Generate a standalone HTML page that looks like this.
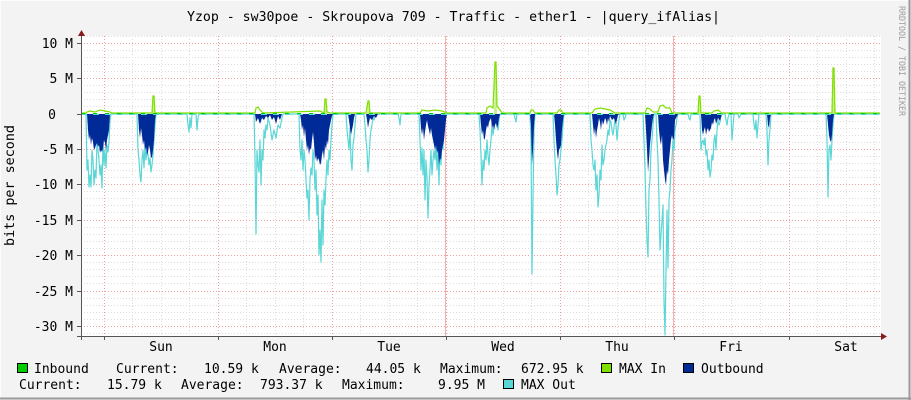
<!DOCTYPE html>
<html><head><meta charset="utf-8"><style>
html,body{margin:0;padding:0;background:#f3f3f3;}
svg{display:block;}
text{font-family:"DejaVu Sans Mono","Liberation Mono",monospace;fill:#000;}
</style></head><body>
<svg width="911" height="400" viewBox="0 0 911 400" xmlns="http://www.w3.org/2000/svg">
<rect x="0" y="0" width="911" height="400" fill="#f3f3f3"/>
<line x1="0" y1="0.5" x2="911" y2="0.5" stroke="#fcfcfc"/>
<line x1="0.5" y1="0" x2="0.5" y2="400" stroke="#fcfcfc"/>
<line x1="909.5" y1="0" x2="909.5" y2="400" stroke="#9a9a9a" stroke-width="2"/>
<line x1="0" y1="398.5" x2="911" y2="398.5" stroke="#9a9a9a" stroke-width="2"/>

<text x="187" y="21" font-size="13" textLength="533" lengthAdjust="spacingAndGlyphs">Yzop - sw30poe - Skroupova 709 - Traffic - ether1 - |query_ifAlias|</text>
<text transform="translate(899,6) rotate(90)" font-size="8.5" fill="#9c9c9c" style="fill:#9c9c9c" textLength="110" lengthAdjust="spacingAndGlyphs">RRDTOOL / TOBI OETIKER</text>
<text transform="translate(14,246) rotate(-90)" font-size="13" textLength="121" lengthAdjust="spacingAndGlyphs">bits per second</text>

<rect x="81" y="36" width="800" height="300" fill="#ffffff"/>
<g stroke="#dcdcdc" stroke-dasharray="1,2" stroke-width="1">
<path d="M81 36.5H881M81 50.5H881M81 57.5H881M81 64.5H881M81 71.5H881M81 85.5H881M81 92.5H881M81 99.5H881M81 106.5H881M81 121.5H881M81 128.5H881M81 135.5H881M81 142.5H881M81 156.5H881M81 163.5H881M81 170.5H881M81 177.5H881M81 191.5H881M81 198.5H881M81 205.5H881M81 212.5H881M81 227.5H881M81 234.5H881M81 241.5H881M81 248.5H881M81 262.5H881M81 269.5H881M81 276.5H881M81 283.5H881M81 298.5H881M81 305.5H881M81 312.5H881M81 319.5H881M81 333.5H881"/>
<path d="M132.5 36V336M161.5 36V336M189.5 36V336M246.5 36V336M275.5 36V336M303.5 36V336M360.5 36V336M389.5 36V336M417.5 36V336M474.5 36V336M503.5 36V336M531.5 36V336M588.5 36V336M617.5 36V336M645.5 36V336M703.5 36V336M731.5 36V336M760.5 36V336M817.5 36V336M846.5 36V336M874.5 36V336"/>
</g>
<g stroke="#f0a0a0" stroke-dasharray="1,2" stroke-width="1">
<path d="M81 43.5H881M81 78.5H881M81 149.5H881M81 184.5H881M81 220.5H881M81 255.5H881M81 291.5H881M81 326.5H881"/>
<path d="M104.5 36V336M218.5 36V336M332.5 36V336M446.5 36V336M560.5 36V336M674.5 36V336M789.5 36V336"/>
</g>
<line x1="445.5" y1="36" x2="445.5" y2="336" stroke="#f08080" stroke-width="1" opacity="0.6"/>
<line x1="673.5" y1="36" x2="673.5" y2="336" stroke="#f08080" stroke-width="1" opacity="0.6"/>

<polyline fill="none" stroke="#5ad6d6" stroke-width="1.2" stroke-linejoin="round" points="81,114 86,114 87,170 88,160 89,187 90,175 91,187 92,150 93,160 94,185 95,170 96,178 97,140 98,150 99,160 100,175 101,165 102,188 103,140 104,165 105,150 106,168 107,145 108,152 109,142 110,120 111,114 137,114 138,150 139,160 140,175 141,182 142,160 143,150 144,168 145,145 146,160 147,150 148,155 149,165 150,158 151,172 152,165 153,155 154,140 155,125 156,114 187,114 188,125 189,132 190,118 191,128 192,114 196,114 197,130 198,118 199,114 254,114 255,160 256,234 257,150 258,165 259,172 260,140 261,185 262,150 263,160 264,130 265,138 266,125 267,130 268,118 270,125 272,140 274,130 276,138 278,125 280,128 282,118 283,114 299,114 300,150 301,160 302,140 303,170 304,150 305,160 306,180 307,198 308,190 309,220 310,180 311,168 312,175 313,150 314,160 315,190 316,170 317,215 318,195 319,255 320,230 321,262 322,200 323,245 324,190 325,205 326,180 327,160 328,175 329,150 330,160 331,140 332,125 333,114 346,114 347,130 348,140 349,150 350,128 351,160 352,170 353,145 354,138 355,125 356,114 364,114 365,125 366,140 367,150 368,172 369,160 370,140 371,130 372,125 373,118 374,120 375,114 398,114 399,118 400,125 401,114 419,114 420,140 421,170 422,148 423,175 424,150 425,200 426,160 427,178 428,218 429,185 430,170 431,150 432,175 433,160 434,150 435,160 436,145 437,170 438,150 439,185 440,140 441,165 442,130 443,150 444,125 445,120 446,114 479,114 480,130 481,155 482,185 483,160 484,170 485,150 486,160 487,140 488,155 489,165 490,150 491,140 492,125 493,135 494,128 495,120 496,118 497,125 498,130 499,120 500,114 514,114 515,118 516,122 517,114 530,114 531,140 532,274 533,200 534,130 535,114 553,114 554,140 555,160 556,175 557,195 558,185 559,165 560,160 561,150 562,140 563,125 564,114 590,114 591,140 592,150 593,165 594,170 595,160 596,190 597,175 598,207 599,195 600,170 601,180 602,145 603,165 604,160 605,150 606,145 607,140 608,130 609,135 610,120 611,122 612,130 613,135 614,128 615,118 616,125 617,140 618,128 619,120 620,114 623,114 624,120 625,118 626,114 643,114 644,140 645,170 646,210 647,240 648,257 649,190 650,180 651,150 652,140 653,125 654,114 656,114 657,140 658,160 659,200 660,250 661,235 662,220 663,205 664,300 665,335 666,270 667,210 668,268 669,200 670,190 671,170 672,160 673,140 674,150 675,130 676,125 677,118 678,114 688,114 689,118 690,120 691,114 700,114 701,150 702,142 703,140 704,145 705,138 706,155 707,150 708,170 709,160 710,177 711,170 712,155 713,160 714,140 715,135 716,150 717,130 718,120 719,125 720,122 721,114 725,114 726,120 727,125 728,118 729,114 731,114 732,140 733,127 734,114 738,114 739,118 741,114 753,114 754,125 755,130 756,120 757,138 758,125 759,114 766,114 767,130 768,165 769,140 770,130 771,114 826,114 827,140 828,197 829,150 830,145 831,160 832,140 833,125 834,114 880,114"/>

<g fill="#002a97">
<polygon points="87,114 88,130 89,140 90,135 91,145 92,138 93,142 94,150 95,148 96,145 97,143 98,147 99,145 100,153 101,150 102,152 103,148 104,140 105,143 106,150 107,140 108,135 109,130 110,114"/>
<polygon points="138,114 139,130 140,138 141,128 142,135 143,145 144,140 145,150 146,147 147,155 148,152 149,145 150,150 151,158 152,157 153,150 154,140 155,120 156,114"/>
<polygon points="255,114 256,122 258,118 260,124 262,118 264,120 266,116 268,118 270,115 272,120 274,117 276,124 278,116 280,120 282,114"/>
<polygon points="300,114 301,120 302,130 303,125 304,137 305,128 306,140 307,150 308,145 309,155 310,148 311,150 312,140 313,132 314,143 315,160 316,155 317,162 318,158 319,160 320,165 321,163 322,155 323,150 324,160 325,145 326,150 327,140 328,145 329,130 330,125 331,120 332,116 333,114"/>
<polygon points="348,114 349,120 350,128 351,135 352,130 353,125 354,118 355,114"/>
<polygon points="366,114 367,120 368,128 369,122 370,118 372,120 374,116 376,118 378,114"/>
<polygon points="420,114 421,128 422,135 423,128 424,140 425,132 426,125 427,120 428,126 429,130 430,135 431,128 432,135 433,140 434,145 435,150 436,145 437,153 438,150 439,165 440,158 441,160 442,150 443,145 444,140 445,130 446,120 447,114"/>
<polygon points="480,114 481,125 482,135 483,130 484,140 485,138 486,130 487,125 488,128 489,122 490,120 491,118 492,128 493,125 494,130 495,125 496,123 497,128 498,125 499,118 500,114"/>
<polygon points="530,114 531,125 532,165 533,150 534,125 535,114"/>
<polygon points="554,114 555,125 556,140 557,152 558,160 559,150 560,148 561,145 562,130 563,120 564,114"/>
<polygon points="592,114 593,125 594,135 595,128 596,138 597,130 598,125 599,118 600,122 601,130 602,120 603,125 604,122 605,118 606,120 607,125 608,118 609,122 610,116 612,120 614,118 616,124 618,115 620,114"/>
<polygon points="645,114 646,130 647,150 648,172 649,160 650,145 651,135 652,125 653,118 654,114"/>
<polygon points="658,114 659,130 660,140 661,145 662,135 663,160 664,170 665,180 666,185 667,170 668,175 669,160 670,150 671,140 672,135 673,140 674,138 675,120 676,118 677,116 678,114"/>
<polygon points="701,114 702,130 703,135 704,130 705,127 706,135 707,130 708,128 709,132 710,130 711,128 712,122 713,125 714,120 715,118 716,124 718,118 720,121 722,114"/>
<polygon points="767,114 768,125 769,128 770,118 771,114"/>
<polygon points="827,114 828,125 829,135 830,140 831,142 832,135 833,120 834,114"/>
</g>
<line x1="81" y1="114.5" x2="881" y2="114.5" stroke="#002a97" stroke-dasharray="3,9" stroke-width="1"/>

<g fill="#c6f08a">
<polygon points="152,114 153,96 154,96 155,114"/>
<polygon points="324,114 325,99 326,99 327,114"/>
<polygon points="367,114 368,101 369,101 370,114"/>
<polygon points="494,114 495,62 496,62 497,114"/>
<polygon points="698,114 699,96 700,96 701,114"/>
<polygon points="832,114 833,68 834,68 835,114"/>
</g>
<polyline fill="none" stroke="#7fe000" stroke-width="1.2" points="81,113 86,113 87,112 90,111 95,112 100,110 105,111 110,112 112,113 150,113 152,113 153,96 154,96 155,113 255,113 256,108 258,107 260,110 262,112 264,113 320,111 324,113 325,99 326,99 327,112 330,113 366,113 368,101 369,101 370,113 420,113 422,110 428,111 435,110 442,111 447,113 486,113 487,108 490,106 493,108 495,62 496,62 497,106 500,110 502,113 530,113 531,110 533,110 535,113 557,113 559,110 561,110 563,113 592,113 595,109 600,108 605,109 610,110 615,113 645,113 647,108 650,109 653,112 658,112 660,106 663,105 666,108 670,108 672,113 698,113 699,96 700,96 701,113 712,113 714,111 718,110 722,113 832,113 833,68 834,68 835,113 880,113"/>
<line x1="81" y1="113.5" x2="881" y2="113.5" stroke="#00cc00" stroke-dasharray="4,8" stroke-width="1"/>
<line x1="81" y1="114.5" x2="881" y2="114.5" stroke="#5ad6d6" stroke-dasharray="6,6" stroke-width="1"/>

<line x1="81.5" y1="32" x2="81.5" y2="340" stroke="#555" stroke-width="1"/>
<line x1="77" y1="336.5" x2="884" y2="336.5" stroke="#555" stroke-width="1"/>
<polygon points="78,36 85,36 81.5,30" fill="#8b1a1a"/>
<polygon points="881,333 881,340 887,336.5" fill="#8b1a1a"/>
<g stroke="#555" stroke-width="1"><path d="M77 43.5H81M77 78.5H81M77 114.5H81M77 149.5H81M77 184.5H81M77 220.5H81M77 255.5H81M77 291.5H81M77 326.5H81"/>
<path d="M104.5 336V340M218.5 336V340M332.5 336V340M446.5 336V340M560.5 336V340M674.5 336V340M789.5 336V340"/></g>

<g font-size="13" text-anchor="end">
<text x="73" y="48">10 M</text>
<text x="73" y="83">5 M</text>
<text x="56" y="119">0</text>
<text x="73" y="154">-5 M</text>
<text x="73" y="189">-10 M</text>
<text x="73" y="225">-15 M</text>
<text x="73" y="260">-20 M</text>
<text x="73" y="296">-25 M</text>
<text x="73" y="331">-30 M</text>
</g>
<g font-size="13" text-anchor="middle">
<text x="161" y="351">Sun</text>
<text x="275" y="351">Mon</text>
<text x="389" y="351">Tue</text>
<text x="503" y="351">Wed</text>
<text x="617" y="351">Thu</text>
<text x="731" y="351">Fri</text>
<text x="846" y="351">Sat</text>
</g>

<rect x="17.5" y="363.5" width="10" height="9" fill="#00cc00" stroke="#000"/>
<rect x="601.5" y="363.5" width="10" height="9" fill="#7fe000" stroke="#000"/>
<rect x="683.5" y="363.5" width="10" height="9" fill="#002a97" stroke="#000"/>
<rect x="503.5" y="379.5" width="10" height="9" fill="#5ad6d6" stroke="#000"/>
<g font-size="13">
<text x="34" y="373">Inbound</text>
<text x="116" y="373">Current:</text>
<text x="204" y="373">10.59 k</text>
<text x="279" y="373">Average:</text>
<text x="366" y="373">44.05 k</text>
<text x="440" y="373">Maximum:</text>
<text x="521" y="373">672.95 k</text>
<text x="619" y="373">MAX In</text>
<text x="701" y="373">Outbound</text>
<text x="19" y="389">Current:</text>
<text x="107" y="389">15.79 k</text>
<text x="181" y="389">Average:</text>
<text x="260" y="389">793.37 k</text>
<text x="342" y="389">Maximum:</text>
<text x="438" y="389">9.95 M</text>
<text x="521" y="389">MAX Out</text>
</g>
</svg>
</body></html>
